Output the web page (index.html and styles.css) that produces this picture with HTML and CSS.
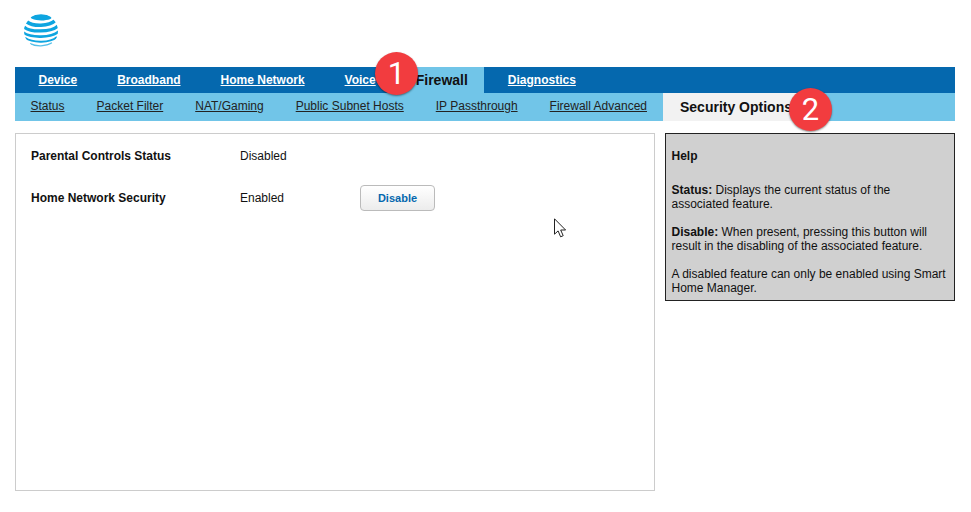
FILE: index.html
```html
<!DOCTYPE html>
<html lang="en">
<head>
<meta charset="utf-8">
<title>Firewall - Security Options</title>
<link rel="stylesheet" href="styles.css">
</head>
<body>
<div class="page">
  <header class="logo-bar">
    <svg class="logo" viewBox="0 0 34 34" aria-label="AT&amp;T">
      <defs><clipPath id="globe"><circle cx="17" cy="17" r="17"/></clipPath></defs>
      <g clip-path="url(#globe)" fill="none" stroke="#0ea5e0">
        <path d="M7 2.6C12 -.6 22 -.6 27 2.6C28 3.4 27.6 4.4 26.4 5C21 7 13 7 8 4.8C6.6 4.2 6.2 3.2 7 2.6Z" fill="#0ea5e0" stroke="none"/>
        <path d="M3 8C9 12.6 25 12.4 31 6.8" stroke-width="3.6"/>
        <path d="M0 12.8C6 18.6 27 18.4 34 11.8" stroke-width="3.2"/>
        <path d="M-1 18.4C7 24.4 27 24 35 17.4" stroke-width="2.6"/>
        <path d="M1 23.8C9 29.4 26 29 33 23" stroke-width="1.9"/>
        <path d="M6 29.6C12 32.8 22 32.6 28 28.8" stroke-width="1.3" stroke-opacity=".7"/>
      </g>
    </svg>
  </header>
  <nav class="main-nav">
    <a class="main-link" href="#">Device</a>
    <a class="main-link" href="#">Broadband</a>
    <a class="main-link" href="#">Home Network</a>
    <a class="main-link" href="#">Voice</a>
    <span class="main-active">Firewall</span>
    <a class="main-link" href="#">Diagnostics</a>
  </nav>
  <nav class="sub-nav">
    <a class="sub-link" href="#">Status</a>
    <a class="sub-link" href="#">Packet Filter</a>
    <a class="sub-link" href="#">NAT/Gaming</a>
    <a class="sub-link" href="#">Public Subnet Hosts</a>
    <a class="sub-link" href="#">IP Passthrough</a>
    <a class="sub-link" href="#">Firewall Advanced</a>
    <span class="sub-active">Security Options</span>
  </nav>
  <div class="content">
    <main class="panel">
      <div class="status-row">
        <strong class="status-label">Parental Controls Status</strong>
        <span class="status-value">Disabled</span>
      </div>
      <div class="status-row">
        <strong class="status-label">Home Network Security</strong>
        <span class="status-value">Enabled</span>
        <button class="action" type="button">Disable</button>
      </div>
    </main>
    <aside class="help">
      <p class="help-title">Help</p>
      <p class="help-text"><b>Status:</b> Displays the current status of the associated feature.</p>
      <p class="help-text"><b>Disable:</b> When present, pressing this button will result in the disabling of the associated feature.</p>
      <p class="help-text">A disabled feature can only be enabled using Smart Home Manager.</p>
    </aside>
  </div>
</div>
<span class="badge badge-one">1</span>
<span class="badge badge-two">2</span>
<svg class="cursor" viewBox="0 0 13 20" aria-hidden="true">
  <path d="M.5.8V16.2L4.1 12.9L6.6 18.8L9.2 17.7L6.7 12H11.6Z" fill="#fff" stroke="#222" stroke-width="1" stroke-linejoin="miter"/>
</svg>
</body>
</html>
```
FILE: styles.css
```css
* { box-sizing: border-box; }
html, body { margin: 0; background: #fff; }
body {
  position: relative;
  width: 971px;
  height: 512px;
  overflow: hidden;
  font-family: "Liberation Sans", Arial, sans-serif;
  font-size: 12px;
  color: #111;
}
.page { padding: 0 16px 0 15px; }
.logo-bar { height: 67px; padding: 14px 0 0 9px; }
.logo { display: block; width: 34px; height: 34px; }

.main-nav {
  display: flex;
  height: 26px;
  padding-left: 3.5px;
  background: #0568ae;
  font-weight: bold;
}
.main-link {
  padding: 0 20px;
  line-height: 26px;
  color: #fff;
}
.main-active {
  margin: 0 4px;
  padding: 0 16px;
  background: #71c5e8;
  color: #111;
  font-size: 14px;
  line-height: 26px;
}

.sub-nav {
  display: flex;
  height: 28px;
  background: #71c5e8;
}
.sub-link {
  padding: 0 16px;
  line-height: 26px;
  color: #222;
}
.sub-link:first-child { padding-left: 15.5px; }
.sub-active {
  padding: 0 17px;
  background: #f2f2f2;
  color: #111;
  font-size: 14px;
  font-weight: bold;
  line-height: 28px;
}

.content {
  display: flex;
  gap: 10px;
  align-items: flex-start;
  margin-top: 12px;
}
.panel {
  width: 640px;
  height: 358px;
  padding: 9px 15px;
  border: 1px solid #ccc;
}
.status-row {
  display: flex;
  align-items: center;
  height: 26px;
  margin-bottom: 16px;
}
.status-label { width: 209px; }
.status-value { width: 120px; }
.action {
  width: 75px;
  height: 26px;
  padding: 0;
  border: 1px solid #bbb;
  border-radius: 4px;
  background: linear-gradient(#fff, #ececec);
  color: #0568ae;
  font: bold 11px "Liberation Sans", Arial, sans-serif;
}

.help {
  width: 290px;
  height: 168px;
  padding: 15px 5.5px 0;
  border: 1px solid #222;
  background: #d0d0d0;
  line-height: 14px;
}
.help-title { margin: 0 0 20px; font-weight: bold; }
.help-text { margin: 0 0 14px; }

.badge {
  position: absolute;
  width: 43px;
  height: 43px;
  border-radius: 50%;
  background: #f23c3f;
  box-shadow: 0 1px 2px rgba(0, 0, 0, .45);
  color: #fff;
  font-family: Roboto, "Liberation Sans", sans-serif;
  font-size: 31px;
  line-height: 43px;
  text-align: center;
}
.badge-one { left: 375px; top: 52px; }
.badge-two { left: 789px; top: 88px; }
.cursor { position: absolute; left: 554px; top: 218px; width: 13px; height: 20px; }
```
